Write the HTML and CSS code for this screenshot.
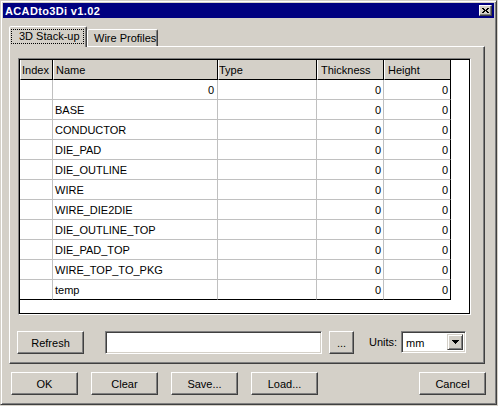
FILE: index.html
```html
<!DOCTYPE html>
<html>
<head>
<meta charset="utf-8">
<link rel="stylesheet" href="styles.css">
</head>
<body>
<div class="window">
  <div class="titlebar">
    <span class="title">ACADto3Di v1.02</span>
    <div class="close">
      <svg width="7" height="5" viewBox="0 0 7 5" shape-rendering="crispEdges"><path d="M0 0h2v1H0zM5 0h2v1H5zM1 1h2v1H1zM4 1h2v1H4zM2 2h3v1H2zM1 3h2v1H1zM4 3h2v1H4zM0 4h2v1H0zM5 4h2v1H5z" fill="#000"/></svg>
    </div>
  </div>
  <div class="body">
    <div class="tabs">
      <div class="tab active"><span class="focus">3D Stack-up</span></div>
      <div class="tab">Wire Profiles</div>
    </div>
    <div class="panel">
      <div class="grid">
        <div class="table">
          <div class="hc hc-index">Index</div>
          <div class="hc hc-name">Name</div>
          <div class="hc hc-type">Type</div>
          <div class="hc">Thickness</div>
          <div class="hc hc-last">Height</div>

          <div class="c"></div><div class="c num name-num">0</div><div class="c"></div><div class="c num">0</div><div class="c num last">0</div>
          <div class="c"></div><div class="c">BASE</div><div class="c"></div><div class="c num">0</div><div class="c num last">0</div>
          <div class="c"></div><div class="c">CONDUCTOR</div><div class="c"></div><div class="c num">0</div><div class="c num last">0</div>
          <div class="c"></div><div class="c">DIE_PAD</div><div class="c"></div><div class="c num">0</div><div class="c num last">0</div>
          <div class="c"></div><div class="c">DIE_OUTLINE</div><div class="c"></div><div class="c num">0</div><div class="c num last">0</div>
          <div class="c"></div><div class="c">WIRE</div><div class="c"></div><div class="c num">0</div><div class="c num last">0</div>
          <div class="c"></div><div class="c">WIRE_DIE2DIE</div><div class="c"></div><div class="c num">0</div><div class="c num last">0</div>
          <div class="c"></div><div class="c">DIE_OUTLINE_TOP</div><div class="c"></div><div class="c num">0</div><div class="c num last">0</div>
          <div class="c"></div><div class="c">DIE_PAD_TOP</div><div class="c"></div><div class="c num">0</div><div class="c num last">0</div>
          <div class="c"></div><div class="c">WIRE_TOP_TO_PKG</div><div class="c"></div><div class="c num">0</div><div class="c num last">0</div>
          <div class="c bottom"></div><div class="c bottom">temp</div><div class="c bottom"></div><div class="c num bottom">0</div><div class="c num last bottom">0</div>
        </div>
      </div>
      <div class="toolrow">
        <button class="btn">Refresh</button>
        <div class="field path"></div>
        <button class="btn dots">...</button>
        <span class="label">Units:</span>
        <div class="field select">
          <span class="sel-text">mm</span>
          <div class="drop">
            <svg width="7" height="4" viewBox="0 0 7 4" shape-rendering="crispEdges"><path d="M0 0h7v1H0zM1 1h5v1H1zM2 2h3v1H2zM3 3h1v1H3z" fill="#000"/></svg>
          </div>
        </div>
      </div>
    </div>
    <div class="actions">
      <button class="btn">OK</button>
      <button class="btn">Clear</button>
      <button class="btn">Save...</button>
      <button class="btn">Load...</button>
      <button class="btn cancel">Cancel</button>
    </div>
  </div>
</div>
</body>
</html>
```

FILE: styles.css
```css
* { box-sizing: border-box; }

body {
  margin: 0;
  background: #d4d0c8;
  font-family: "Liberation Sans", Arial, sans-serif;
  font-size: 11px;
  color: #000;
}

.window {
  width: 497px;
  height: 405px;
  background: #d4d0c8;
  border: 1px solid;
  border-color: #d4d0c8 #404040 #404040 #d4d0c8;
  box-shadow: inset 1px 1px #fff, inset -1px -1px #808080;
  padding: 2px;
  display: flex;
  flex-direction: column;
}

.titlebar {
  height: 15px;
  background: #000080;
  color: #fff;
  display: flex;
  align-items: center;
  justify-content: space-between;
  padding: 0 2px;
}

.title {
  font-weight: bold;
  letter-spacing: 0.35px;
  line-height: 14px;
  padding-top: 1px;
}

.close {
  width: 13px;
  height: 11px;
  background: #d4d0c8;
  border: 1px solid;
  border-color: #fff #404040 #404040 #fff;
  box-shadow: inset -1px -1px #808080;
  display: flex;
  align-items: center;
  justify-content: center;
}
.close svg { display: block; margin-right: 1px; }

.body {
  flex: 1;
  padding: 8px 0 0 6px;
}

.tabs {
  display: flex;
  align-items: flex-end;
  height: 20px;
  position: relative;
  z-index: 1;
}

.tab {
  height: 17px;
  width: 71px;
  background: #d4d0c8;
  border: 1px solid;
  border-bottom: none;
  border-color: #fff #404040 transparent #fff;
  border-radius: 2px 2px 0 0;
  box-shadow: inset -1px 0 #808080;
  padding-left: 6px;
  line-height: 16px;
  white-space: nowrap;
}

.tab.active {
  height: 21px;
  width: 78px;
  margin-bottom: -1px;
  padding: 2px 0 0 1px;
}

.focus {
  display: block;
  width: 73px;
  height: 15px;
  outline: 1px dotted #000;
  outline-offset: -1px;
  padding: 1px 0 0 8px;
  line-height: 12px;
}

.panel {
  width: 476px;
  height: 318px;
  border: 1px solid;
  border-color: #fff #404040 #404040 #fff;
  box-shadow: inset -1px -1px #808080;
  padding: 11px 0 0 7px;
}

.grid {
  width: 453px;
  height: 257px;
  margin-left: 1px;
  background: #fff;
  border: 1px solid;
  border-color: #808080 #fff #fff #808080;
  box-shadow: inset 1px 1px #000, inset -1px -1px #000;
  padding: 1px;
}

.table {
  display: grid;
  grid-template-columns: 33px 165px 99px 67px 67px;
  width: 431px;
}

.hc {
  height: 20px;
  background: #d4d0c8;
  border-left: 1px solid #fff;
  border-right: 1px solid #000;
  border-bottom: 1px solid #000;
  padding: 2px 0 0 3px;
  line-height: 17px;
  white-space: nowrap;
  overflow: hidden;
}
.hc-index { padding-left: 1px; }
.hc-name { padding-left: 2px; }
.hc-type { padding-left: 0; }

.c {
  height: 20px;
  border-right: 1px solid #c0c0c0;
  border-bottom: 1px solid #c0c0c0;
  padding: 2px 0 0 2px;
  line-height: 17px;
  white-space: nowrap;
  overflow: hidden;
}
.c.num { text-align: right; padding-right: 2px; }
.c.name-num { padding-right: 3px; }
.c.last { border-right-color: #000; }
.c.bottom { border-bottom-color: #000; }

.toolrow {
  display: flex;
  align-items: flex-start;
  margin-top: 16px;
  height: 23px;
}

.btn {
  font-family: inherit;
  font-size: 11px;
  color: #000;
  width: 67px;
  height: 23px;
  padding: 0;
  margin: 0;
  background: #d4d0c8;
  border: 1px solid;
  border-color: #fff #404040 #404040 #fff;
  box-shadow: inset -1px -1px #808080;
  line-height: 12px;
}

.btn.dots { width: 25px; margin-left: 7px; }

.field {
  background: #fff;
  border: 1px solid;
  border-color: #808080 #fff #fff #808080;
  box-shadow: inset 1px 1px #404040, inset -1px -1px #d4d0c8;
}

.field.path {
  width: 217px;
  height: 23px;
  margin-left: 21px;
}

.label {
  width: 32px;
  margin-left: 15px;
  line-height: 23px;
  white-space: nowrap;
}

.field.select {
  width: 65px;
  height: 22px;
  padding: 2px;
  display: flex;
  align-items: stretch;
}

.sel-text {
  flex: 1;
  padding-left: 2px;
  line-height: 18px;
}

.drop {
  width: 16px;
  background: #d4d0c8;
  border: 1px solid;
  border-color: #d4d0c8 #404040 #404040 #d4d0c8;
  box-shadow: inset 1px 1px #fff, inset -1px -1px #808080;
  display: flex;
  align-items: center;
  justify-content: center;
}
.drop svg { display: block; }

.actions {
  display: flex;
  gap: 13px;
  margin-top: 8px;
  padding-left: 2px;
  width: 477px;
}

.btn.cancel { margin-left: auto; }
```
